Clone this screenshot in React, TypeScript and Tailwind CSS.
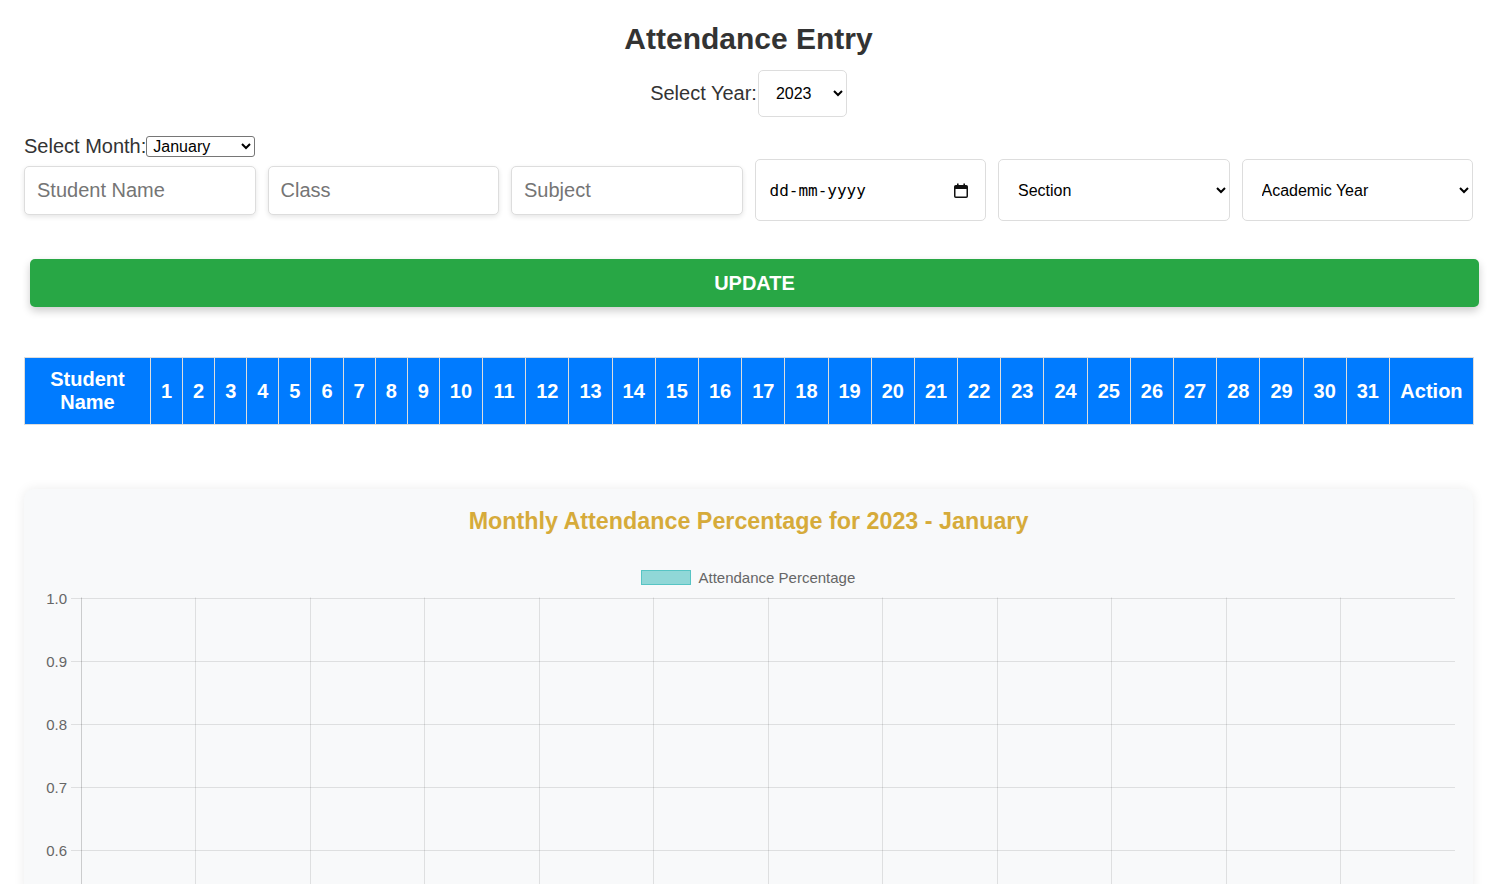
import { useState } from "react";

const DAYS = Array.from({ length: 31 }, (_, i) => i + 1);
const Y_TICKS = [1.0, 0.9, 0.8, 0.7, 0.6];
const CATEGORIES = 12;

function CalendarIcon() {
  return (
    <svg width="14" height="15" viewBox="0 0 14 15" fill="none">
      <rect x="0.75" y="2.75" width="12.5" height="11.5" rx="1" stroke="#111" strokeWidth="1.5" />
      <rect x="1" y="3" width="12" height="3" fill="#111" />
      <rect x="3" y="0.5" width="1.6" height="3" fill="#111" />
      <rect x="9.4" y="0.5" width="1.6" height="3" fill="#111" />
    </svg>
  );
}

function AttendanceChart() {
  const top = 58.5;
  const step = 63.2;
  const left = 56.5;
  const right = 1431;
  const colW = (right - left) / CATEGORIES;
  const height = 360;

  return (
    <svg width={1449} height={height} viewBox={`0 0 1449 ${height}`} className="block">
      {/* legend */}
      <rect x={617.5} y={31.5} width={49} height={14} fill="rgba(75,192,192,0.6)" stroke="rgba(75,192,192,0.9)" strokeWidth={1} />
      <text x={674.5} y={43.5} fontSize={15} fill="#666" fontFamily="Liberation Sans, Arial, sans-serif">
        Attendance Percentage
      </text>

      {/* horizontal grid + y labels */}
      {Y_TICKS.map((v, k) => {
        const y = Math.round(top + step * k) + 0.5;
        return (
          <g key={v}>
            <line x1={47} x2={right} y1={y} y2={y} stroke="rgba(0,0,0,0.1)" strokeWidth={1} />
            <text
              x={43}
              y={y + 5}
              textAnchor="end"
              fontSize={15}
              fill="#666"
              fontFamily="Liberation Sans, Arial, sans-serif"
            >
              {v.toFixed(1)}
            </text>
          </g>
        );
      })}

      {/* vertical grid */}
      {Array.from({ length: CATEGORIES }, (_, i) => {
        const x = Math.round(left + colW * i) + 0.5;
        return (
          <line
            key={i}
            x1={x}
            x2={x}
            y1={top}
            y2={height}
            stroke={i === 0 ? "rgba(0,0,0,0.18)" : "rgba(0,0,0,0.1)"}
            strokeWidth={1}
          />
        );
      })}
    </svg>
  );
}

export default function App() {
  const [year, setYear] = useState("2023");
  const [month, setMonth] = useState("January");

  return (
    <div className="min-h-screen bg-white px-6 pb-10 font-['Liberation_Sans',Arial,sans-serif] text-[#333]">
      <h1 className="pt-[22px] text-center text-[30px] font-bold leading-[34px] text-[#333]">
        Attendance Entry
      </h1>

      <div className="mt-[14px] flex items-center justify-center">
        <label className="text-[20px] leading-[23px]">Select Year:</label>
        <select
          value={year}
          onChange={(e) => setYear(e.target.value)}
          className="ml-[1px] h-[47px] w-[89px] rounded-[5px] border border-[#ddd] bg-white pl-[13px] pr-[6px] text-[16px] text-black"
        >
          <option>2022</option>
          <option>2023</option>
          <option>2024</option>
        </select>
      </div>

      <div className="mt-[18px] flex items-center">
        <label className="text-[20px] leading-[23px]">Select Month:</label>
        <select
          value={month}
          onChange={(e) => setMonth(e.target.value)}
          className="h-[21px] w-[109px] rounded-[3px] border border-[#767676] bg-white pl-[2px] text-[16px] leading-[19px] text-black"
        >
          <option>January</option>
          <option>February</option>
          <option>March</option>
        </select>
      </div>

      <div className="mt-[1px] grid grid-cols-6 items-center gap-x-[12px]">
        {["Student Name", "Class", "Subject"].map((p) => (
          <input
            key={p}
            placeholder={p}
            className="h-[49px] w-full rounded-[5px] border border-[#ddd] bg-white px-[12px] text-[20px] shadow-[0_2px_5px_rgba(0,0,0,0.1)] placeholder:text-[#757575]"
          />
        ))}
        <div className="flex h-[62px] items-center justify-between rounded-[5px] border border-[#ddd] bg-white pl-[14px] pr-[17px]">
          <span className="pt-[2px] font-['DejaVu_Sans_Mono',monospace] text-[16px] text-black">dd-mm-yyyy</span>
          <CalendarIcon />
        </div>
        <select className="h-[62px] w-full rounded-[5px] border border-[#ddd] bg-white pl-[15px] pr-[8px] text-[16px] text-black">
          <option>Section</option>
        </select>
        <select className="h-[62px] w-full rounded-[5px] border border-[#ddd] bg-white pl-[15px] pr-[8px] text-[16px] text-black">
          <option>Academic Year</option>
        </select>
      </div>

      <button className="ml-[6px] mt-[38px] block h-[48px] w-full rounded-[5px] bg-[#28a745] text-[20px] font-bold text-white shadow-[0_4px_8px_rgba(0,0,0,0.2)]">
        UPDATE
      </button>

      <table className="mt-[50px] w-full table-fixed border-collapse">
        <thead>
          <tr>
            <th className="w-[126px] border border-[#ddd] bg-[#007bff] px-[10px] py-[10px] text-center text-[20px] font-bold leading-[23px] text-white">
              Student Name
            </th>
            {DAYS.map((d) => (
              <th
                key={d}
                className={`${d < 10 ? "w-[32.1px]" : "w-[43.2px]"} border border-[#ddd] bg-[#007bff] py-[10px] text-center text-[20px] font-bold leading-[23px] text-white`}
              >
                {d}
              </th>
            ))}
            <th className="w-[84px] border border-[#ddd] bg-[#007bff] py-[10px] text-center text-[20px] font-bold leading-[23px] text-white">
              Action
            </th>
          </tr>
        </thead>
        <tbody />
      </table>

      <div className="mt-[64px] rounded-[10px] bg-[#f8f9fa] pt-[18px] shadow-[0_0_12px_rgba(0,0,0,0.08)]">
        <h2 className="text-center text-[23.3px] font-bold leading-[28px] text-[#d6ab3a]">
          Monthly Attendance Percentage for {year} - {month}
        </h2>
        <div className="mt-[4px]">
          <AttendanceChart />
        </div>
      </div>
    </div>
  );
}
